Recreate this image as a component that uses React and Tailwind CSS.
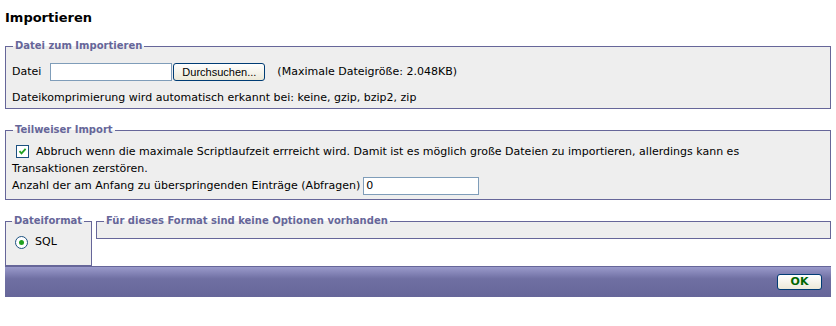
import React from "react";

const font = { fontFamily: '"DejaVu Sans", Verdana, sans-serif' };

const Legend = ({ children }) => (
  <legend className="px-[2px] ml-[1px] text-[10px] leading-[14px] font-bold text-[#666699]">
    {children}
  </legend>
);

const CheckBox = () => (
  <span className="inline-block align-middle w-[13px] h-[13px] ml-[4px] mr-[7px] border border-[#1c5180] bg-white relative top-[-1px]">
    <svg viewBox="0 0 11 11" className="w-[11px] h-[11px]">
      <path d="M2.5 5.2 L4.5 7.4 L8.6 2.8" fill="none" stroke="#21a121" strokeWidth="1.8" />
    </svg>
  </span>
);

const Radio = () => (
  <span className="inline-flex items-center justify-center align-middle w-[13px] h-[13px] ml-[4px] mr-[7px] rounded-full border border-[#1c5180] bg-white">
    <span className="w-[5px] h-[5px] rounded-full bg-[#21a121]" />
  </span>
);

export default function App() {
  return (
    <div className="bg-white w-[836px] h-[326px] px-[5px] text-black text-[11px]" style={font}>
      <h2 className="text-[13px] leading-[16px] font-bold pt-[10px]">Importieren</h2>

      {/* Datei */}
      <fieldset className="mt-[13px] border border-[#666699] bg-[#eeeeee] px-[6px] pb-[3px]">
        <Legend>Datei zum Importieren</Legend>
        <div className="flex items-center mt-[10px] h-[18px]">
          <span className="mr-[9px]">Datei</span>
          <span className="w-[122px] h-[18px] border border-[#7f9db9] bg-white" />
          <span
            className="ml-[1px] w-[92px] h-[18px] flex items-center justify-center rounded-[3px] border border-[#003c74] bg-gradient-to-b from-white to-[#ece9d8] text-[11px]"
            style={{ fontFamily: '"Liberation Sans", Arial, sans-serif' }}
          >
            Durchsuchen...
          </span>
          <span className="ml-[12px]">(Maximale Dateigröße: 2.048KB)</span>
        </div>
        <p className="mt-[10px] leading-[14px]">
          Dateikomprimierung wird automatisch erkannt bei: keine, gzip, bzip2, zip
        </p>
      </fieldset>

      {/* Teilweiser Import */}
      <fieldset className="mt-[14px] border border-[#666699] bg-[#eeeeee] px-[6px] pb-[4px]">
        <Legend>Teilweiser Import</Legend>
        <p className="mt-[6px] leading-[17px]">
          <CheckBox />
          Abbruch wenn die maximale Scriptlaufzeit errreicht wird. Damit ist es möglich große Dateien zu
          importieren, allerdings kann es
          <br />
          Transaktionen zerstören.
        </p>
        <div className="flex items-center h-[18px]">
          <span className="mr-[3px]">Anzahl der am Anfang zu überspringenden Einträge (Abfragen)</span>
          <span className="w-[116px] h-[18px] border border-[#7f9db9] bg-white pl-[2px] leading-[16px]">0</span>
        </div>
      </fieldset>

      {/* Dateiformat */}
      <div className="flex items-start gap-[4px] mt-[14px]">
        <fieldset className="w-[87px] min-w-0 h-[52px] border border-[#666699] bg-[#eeeeee] px-[5px]">
          <Legend>Dateiformat</Legend>
          <div className="flex items-center mt-[6px]">
            <Radio />
            <span>SQL</span>
          </div>
        </fieldset>
        <fieldset className="flex-1 min-w-0 h-[25px] border border-[#666699] bg-[#eeeeee] px-[6px]">
          <Legend>Für dieses Format sind keine Optionen vorhanden</Legend>
        </fieldset>
      </div>

      <div className="flex justify-end items-center h-[31px] border-t border-[#666699] bg-gradient-to-b from-[#9a9acb] via-[#6f6fa2] via-40% to-[#666699] pr-[9px]">
        <span className="w-[45px] h-[16px] flex items-center justify-center rounded-[3px] border border-[#003c74] bg-gradient-to-b from-white to-[#ece9d8] text-[11px] font-bold text-[#006600]">
          OK
        </span>
      </div>
    </div>
  );
}
